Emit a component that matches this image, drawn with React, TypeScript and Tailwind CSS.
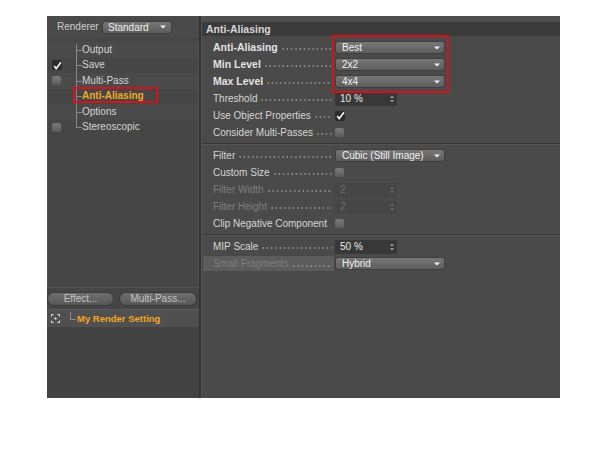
import React from "react";

const FONT = { fontFamily: '"Liberation Sans", Arial, sans-serif' };

function Arrow() {
  return (
    <svg width="6" height="4" viewBox="0 0 6 4" className="shrink-0">
      <path d="M0 0.5 L6 0.5 L3 3.5 Z" fill="#f0f0f0" />
    </svg>
  );
}

function Spinner({ dim }: { dim?: boolean }) {
  return (
    <svg width="4" height="8" viewBox="0 0 4 8" className="shrink-0">
      <path d="M0 3 L4 3 L2 0.5 Z M0 5 L4 5 L2 7.5 Z" fill={dim ? "#6a6a6a" : "#9a9a9a"} />
    </svg>
  );
}

function CheckBox({ checked }: { checked?: boolean }) {
  if (checked) {
    return (
      <div className="w-[10px] h-[10px] rounded-[2px] bg-[#2c2c2c] flex items-center justify-center">
        <svg width="9" height="9" viewBox="0 0 9 9">
          <path d="M1.2 5 L3.2 7.6 L8 1.2" stroke="#f2f2f2" strokeWidth="1.6" fill="none" />
        </svg>
      </div>
    );
  }
  return <div className="w-[9px] h-[9px] rounded-[2px] bg-gradient-to-b from-[#7a7a7a] to-[#5c5c5c]" />;
}

function Dropdown({ value }: { value: string }) {
  return (
    <div className="w-[110px] h-[13px] rounded-[3px] bg-gradient-to-b from-[#777] to-[#5d5d5d] border border-[#3e3e3e] flex items-center justify-between pl-[6px] pr-[4px]">
      <span className="text-[10px] text-[#f0f0f0] leading-[11px]">{value}</span>
      <Arrow />
    </div>
  );
}

function NumberField({ value, dim }: { value: string; dim?: boolean }) {
  return (
    <div
      className={`w-[62px] h-[14px] flex items-center justify-between pl-[5px] pr-[3px] ${
        dim ? "bg-[#464646]" : "bg-[#383838]"
      }`}
    >
      <span className={`text-[10px] leading-[12px] ${dim ? "text-[#6e6e6e]" : "text-[#eaeaea]"}`}>{value}</span>
      <Spinner dim={dim} />
    </div>
  );
}

interface RowProps {
  label: string;
  bold?: boolean;
  dim?: boolean;
  noDots?: boolean;
  highlight?: boolean;
  children: React.ReactNode;
}

function Row({ label, bold, dim, noDots, highlight, children }: RowProps) {
  return (
    <div className="h-[17px] flex items-center">
      <div
        className={`flex items-center whitespace-nowrap ${
          highlight ? "w-[131px] -ml-[10px] pl-[10px] h-[15px] bg-[#5c5c5c]" : "w-[121px]"
        }`}
      >
        <span
          className={`leading-[13px] shrink-0 ${
            bold ? "text-[10.5px] font-bold text-[#e2e2e2]" : "text-[10px]"
          } ${dim ? "text-[#7e7e7e]" : bold ? "" : "text-[#d6d6d6]"}`}
        >
          {label}
        </span>
        {!noDots && (
          <span className="flex-1 min-w-0 h-[2px] self-end mb-[4px] ml-[4px] mr-[2px] bg-[radial-gradient(circle_at_1px_1px,#9a9a9a_0.55px,transparent_0.9px)] bg-[length:4.3px_2px]" />
        )}
      </div>
      <div className="ml-[1px]">{children}</div>
    </div>
  );
}

function Separator() {
  return (
    <div className="-ml-[11px] my-[2px]">
      <div className="h-px bg-[#363636]" />
      <div className="h-px bg-[#555]" />
    </div>
  );
}

const treeItems = [
  { label: "Output", box: null },
  { label: "Save", box: "checked" },
  { label: "Multi-Pass", box: "empty" },
  { label: "Anti-Aliasing", box: null, active: true },
  { label: "Options", box: null },
  { label: "Stereoscopic", box: "empty" },
];

export default function App() {
  return (
    <div className="w-[600px] h-[462px] bg-white pt-[16px] pl-[47px]" style={FONT}>
      <div className="w-[513px] h-[382px] flex relative">
        {/* Left panel */}
        <div className="w-[152px] flex flex-col bg-[#464646]">
          <div className="h-[22px] flex items-center pl-[10px] bg-[#4a4a4a]">
            <span className="w-[45px] text-[10px] text-[#cfcfcf] leading-[12px]">Renderer</span>
            <div className="w-[70px] h-[13px] rounded-[3px] bg-gradient-to-b from-[#777] to-[#5d5d5d] border border-[#3e3e3e] flex items-center justify-between pl-[5px] pr-[5px]">
              <span className="text-[10px] text-[#eee] leading-[11px]">Standard</span>
              <Arrow />
            </div>
          </div>

          <div className="h-[250px] border-x border-b border-[#535353] pt-[4px]">
            {treeItems.map((item, i) => (
              <div
                key={item.label}
                className={`h-[15.5px] flex items-center ${i % 2 === 0 ? "bg-[#4a4a4a]" : "bg-[#464646]"}`}
              >
                <div className="w-[21px] pl-[4px] flex items-center">
                  {item.box === "checked" && <CheckBox checked />}
                  {item.box === "empty" && <CheckBox />}
                </div>
                <div className="relative w-[14px] h-full ml-[7px] shrink-0">
                  <div
                    className={`absolute left-0 w-px bg-[#8a8a8a] ${
                      i === treeItems.length - 1 ? "top-0 h-1/2" : i === 0 ? "top-[2px] bottom-0" : "top-0 bottom-0"
                    }`}
                  />
                  <div className="absolute left-0 top-1/2 w-[6px] h-px bg-[#8a8a8a]" />
                </div>
                <span
                  className={`-ml-[8px] text-[10px] leading-[12px] ${
                    item.active ? "font-bold text-[#f5a623]" : "text-[#d4d4d4]"
                  }`}
                >
                  {item.label}
                </span>
              </div>
            ))}
          </div>

          <div className="h-[21px] flex items-center gap-[5px]">
            <div className="w-[67px] h-[14px] rounded-full bg-gradient-to-b from-[#6e6e6e] to-[#585858] border border-[#3a3a3a] flex items-center justify-center">
              <span className="text-[10px] text-[#c4c4c4] leading-[12px]">Effect...</span>
            </div>
            <div className="w-[78px] h-[14px] rounded-full bg-gradient-to-b from-[#6e6e6e] to-[#585858] border border-[#3a3a3a] flex items-center justify-center">
              <span className="text-[10px] text-[#c4c4c4] leading-[12px]">Multi-Pass...</span>
            </div>
          </div>
          <div className="h-px bg-[#5a5a5a]" />
          <div className="h-[17px] flex items-center bg-[#505050]">
            <svg width="9" height="9" viewBox="0 0 9 9" className="ml-[4px]">
              <path d="M0.5 0.5h2M6.5 0.5h2M0.5 8.5h2M6.5 8.5h2M0.5 0.5v2M8.5 0.5v2M0.5 6.5v2M8.5 6.5v2" stroke="#e8e8e8" strokeWidth="1" />
              <rect x="3.5" y="3.5" width="2" height="2" fill="#e8e8e8" />
            </svg>
            <div className="relative w-[7px] h-full ml-[10px]">
              <div className="absolute left-0 top-[2px] h-[7px] w-px bg-[#8a8a8a]" />
              <div className="absolute left-0 top-[9px] w-[6px] h-px bg-[#8a8a8a]" />
            </div>
            <span className="text-[9.5px] font-bold text-[#f5a623] leading-[12px]">My Render Setting</span>
          </div>
          <div className="flex-1 bg-[#434343]" />
        </div>

        {/* Divider */}
        <div className="w-[3px] bg-[#333] border-r border-[#555]" />

        {/* Right panel */}
        <div className="flex-1 flex flex-col bg-[#4a4a4a] relative">
          <div className="h-[6px] bg-[#4f4f4f]" />
          <div className="h-[14px] bg-[#3b3b3b] flex items-center pl-[4px]">
            <span className="text-[10.5px] font-bold text-[#d6d6d6] leading-[13px]">Anti-Aliasing</span>
          </div>
          <div className="pl-[11px] pt-[3px]">
            <Row label="Anti-Aliasing" bold>
              <Dropdown value="Best" />
            </Row>
            <Row label="Min Level" bold>
              <Dropdown value="2x2" />
            </Row>
            <Row label="Max Level" bold>
              <Dropdown value="4x4" />
            </Row>
            <Row label="Threshold">
              <NumberField value="10 %" />
            </Row>
            <Row label="Use Object Properties">
              <CheckBox checked />
            </Row>
            <Row label="Consider Multi-Passes">
              <CheckBox />
            </Row>
            <Separator />
            <Row label="Filter">
              <Dropdown value="Cubic (Still Image)" />
            </Row>
            <Row label="Custom Size">
              <CheckBox />
            </Row>
            <Row label="Filter Width" dim>
              <NumberField value="2" dim />
            </Row>
            <Row label="Filter Height" dim>
              <NumberField value="2" dim />
            </Row>
            <Row label="Clip Negative Component" noDots>
              <CheckBox />
            </Row>
            <Separator />
            <Row label="MIP Scale">
              <NumberField value="50 %" />
            </Row>
            <Row label="Small Fragments" dim highlight>
              <Dropdown value="Hybrid" />
            </Row>
          </div>
        </div>

        {/* Annotation boxes */}
        <div className="absolute left-[26px] top-[71px] w-[85px] h-[16px] border-2 border-[#d2131b] pointer-events-none" />
        <div className="absolute left-[285px] top-[19px] w-[117px] h-[58px] border-2 border-[#d2131b] pointer-events-none" />
      </div>
    </div>
  );
}
